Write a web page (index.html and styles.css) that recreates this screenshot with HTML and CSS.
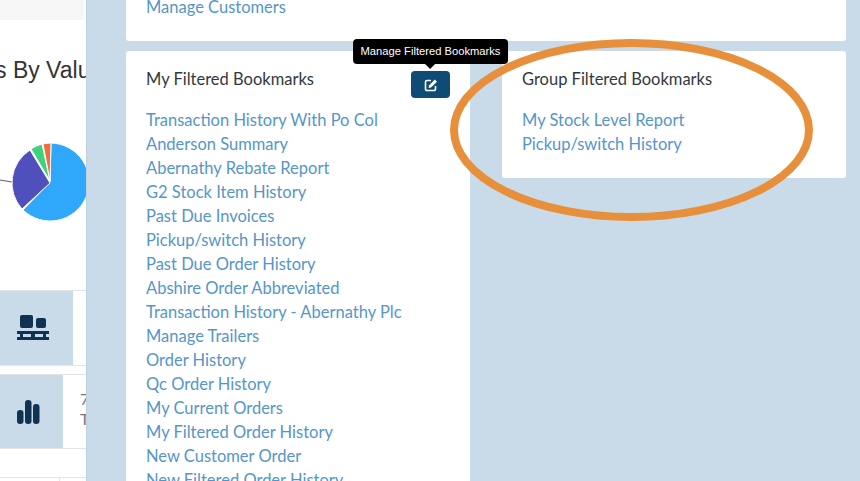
FILE: index.html
```html
<!DOCTYPE html>
<html lang="en">
<head>
<meta charset="utf-8">
<title>Filtered Bookmarks</title>
<link rel="stylesheet" href="styles.css">
</head>
<body>
<div class="page">
  <aside class="behind">
    <div class="strip"></div>
    <h2 class="chart-title">s By Value</h2>
    <div class="pie-wrap">
      <svg class="pie" width="86" height="90" viewBox="0 0 86 90" aria-hidden="true">
        <line x1="0" y1="38" x2="12" y2="40" stroke="#555c6e" stroke-width="1"/>
        <path d="M50 40 L51 1 A39 39 0 1 1 23 68 Z" fill="#2fa8fb" stroke="#fff" stroke-width="1"/>
        <path d="M50 41 L22 67 A39 39 0 0 1 30 8 Z" fill="#5050bd" stroke="#fff" stroke-width="1"/>
        <path d="M50 39 L31 7 A39 39 0 0 1 42 2 Z" fill="#3fd27c" stroke="#fff" stroke-width="1"/>
        <path d="M50 39 L43 2 A39 39 0 0 1 51 1 Z" fill="#ee6e3f" stroke="#fff" stroke-width="1"/>
      </svg>
    </div>
    <div class="stat stat-a">
      <div class="stat-icon icon-a">
        <svg width="32" height="26" viewBox="0 0 32 26" aria-hidden="true">
          <rect x="3" y="0" width="13" height="13" rx="2" fill="#0f3252"/>
          <rect x="19" y="3" width="10" height="10" rx="2" fill="#0f3252"/>
          <path d="M0 16H32V19H29V22H32V25H0V22H3V19H0ZM6 19V22H14V19ZM18 19V22H26V19Z" fill="#0f3252" fill-rule="evenodd"/>
        </svg>
      </div>
    </div>
    <div class="stat stat-b">
      <div class="stat-icon icon-b">
        <svg width="23" height="24" viewBox="0 0 23 24" aria-hidden="true">
          <rect x="0" y="10" width="6.500" height="14" rx="3" fill="#0f3252"/>
          <rect x="8" y="0" width="6.500" height="24" rx="3" fill="#0f3252"/>
          <rect x="16" y="4" width="6.500" height="20" rx="3" fill="#0f3252"/>
        </svg>
      </div>
      <div class="stat-text">7<br>T</div>
    </div>
    <div class="foot"><span class="foot-cell"></span></div>
  </aside>
  <main class="drawer">
    <section class="card card-top">
      <a class="link" href="#">Manage Customers</a>
    </section>
    <div class="columns">
      <section class="card card-left">
        <div class="card-head">
          <h3 class="card-title">My Filtered Bookmarks</h3>
          <button class="edit" type="button" aria-label="Manage Filtered Bookmarks">
            <svg width="14" height="14" viewBox="0 0 14 14" aria-hidden="true">
              <path d="M7 2.500H3A1.500 1.500 0 0 0 1.500 4V11A1.500 1.500 0 0 0 3 12.500H10A1.500 1.500 0 0 0 11.500 11V8" fill="none" stroke="#fff" stroke-width="1.600"/>
              <path d="M5 7.500L10.800 1.500L13 3.700L7 9.500L4.700 10Z" fill="#fff"/>
            </svg>
            <span class="tip">Manage Filtered Bookmarks</span>
          </button>
        </div>
        <a class="link" href="#">Transaction History With Po Col</a>
        <a class="link" href="#">Anderson Summary</a>
        <a class="link" href="#">Abernathy Rebate Report</a>
        <a class="link" href="#">G2 Stock Item History</a>
        <a class="link" href="#">Past Due Invoices</a>
        <a class="link" href="#">Pickup/switch History</a>
        <a class="link" href="#">Past Due Order History</a>
        <a class="link" href="#">Abshire Order Abbreviated</a>
        <a class="link" href="#">Transaction History - Abernathy Plc</a>
        <a class="link" href="#">Manage Trailers</a>
        <a class="link" href="#">Order History</a>
        <a class="link" href="#">Qc Order History</a>
        <a class="link" href="#">My Current Orders</a>
        <a class="link" href="#">My Filtered Order History</a>
        <a class="link" href="#">New Customer Order</a>
        <a class="link" href="#">New Filtered Order History</a>
      </section>
      <section class="card card-right">
        <div class="card-head">
          <h3 class="card-title">Group Filtered Bookmarks</h3>
        </div>
        <a class="link" href="#">My Stock Level Report</a>
        <a class="link" href="#">Pickup/switch History</a>
      </section>
    </div>
  </main>
</div>
<svg class="ring" width="372" height="192" viewBox="0 0 372 192" aria-hidden="true">
  <ellipse cx="186.500" cy="96" rx="177.500" ry="87" fill="none" stroke="#e78f3b" stroke-width="8"/>
</svg>
</body>
</html>
```

FILE: styles.css
```css
* { box-sizing: border-box; }
html, body { margin: 0; height: 100%; overflow: hidden; }
body { font-family: "Lato", "Liberation Sans", sans-serif; background: #fff; position: relative; }
.page { display: flex; width: 860px; height: 481px; overflow: hidden; }

.behind { width: 86px; flex: none; overflow: hidden; background: #fff; color: #333; }
.strip { height: 20px; width: 84px; background: #f7f7f7; }
.chart-title { margin: 36px 0 0 -5px; width: 200px; font-size: 23px; line-height: 28px; font-weight: 400; font-family: "Liberation Sans", sans-serif; color: #333; white-space: nowrap; }
.pie-wrap { margin-top: 58px; height: 90px; }
.pie { display: block; }
.stat { display: flex; border-top: 1px solid #e4e4e4; border-bottom: 1px solid #e4e4e4; }
.stat-a { margin-top: 58px; height: 76px; }
.stat-b { margin-top: 8px; height: 75px; }
.stat-icon { display: flex; align-items: center; padding-left: 17px; background: #c9dbe8; height: 100%; flex: none; }
.icon-a { width: 73px; }
.icon-b { width: 63px; }
.stat-text { margin-left: 17px; padding-top: 14px; font-size: 16px; line-height: 20px; color: #777; }
.foot { margin-top: 28px; height: 8px; border-top: 1px solid #e4e4e4; }
.foot-cell { display: block; width: 60px; height: 100%; border-right: 1px solid #e4e4e4; }

.drawer { flex: 1; min-width: 0; background: #c9dbe8; padding: 0 14px 0 39px; border-left: 1px solid #bfd0df; display: flex; flex-direction: column; gap: 10px; }
.card { background: #fff; border-radius: 3px; padding: 0 20px; }
.link { display: block; font-size: 16.500px; line-height: 24px; color: #5596c9; text-decoration: none; white-space: nowrap; }
.card-top { flex: none; height: 46px; margin-top: -5px; border-radius: 0 0 3px 3px; }
.columns { flex: none; display: flex; gap: 32px; align-items: flex-start; }
.card-left { width: 344px; height: 460px; }
.card-right { width: 344px; padding-bottom: 22px; }
.card-head { display: flex; height: 57px; padding-top: 17px; position: relative; }
.card-title { margin: 0; font-size: 16.500px; line-height: 22px; font-weight: 400; color: #33383f; white-space: nowrap; }
.edit { position: absolute; left: 265px; top: 20px; width: 39px; height: 27px; padding: 0; border: 0; border-radius: 4px; background: #0f4c75; display: flex; align-items: center; justify-content: center; }
.tip { position: absolute; left: 50%; bottom: 34px; transform: translateX(-50%); padding: 0 8px; height: 25px; line-height: 25px; background: #000; color: #fff; font-family: "Liberation Sans", sans-serif; font-size: 11.200px; border-radius: 4px; white-space: nowrap; }
.tip::after { content: ""; position: absolute; left: 50%; top: 100%; margin-left: -5px; border: 5px solid transparent; border-bottom: 0; border-top-color: #000; }
.ring { position: absolute; left: 445px; top: 34px; width: 372px; height: 192px; pointer-events: none; }
```
